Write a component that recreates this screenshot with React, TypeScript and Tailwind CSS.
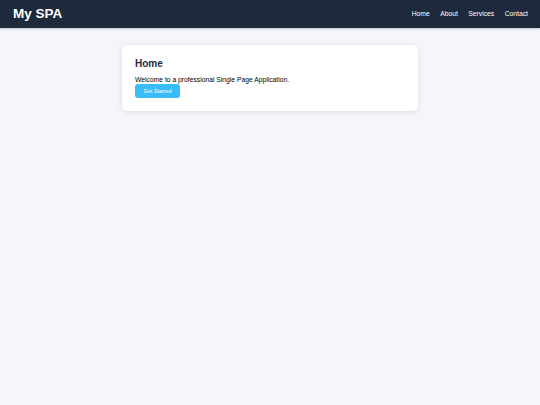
export default function App() {
  return (
    <div className="min-h-[405px] bg-[#f4f6fa]" style={{ fontFamily: '"Liberation Sans", Arial, sans-serif' }}>
      <header className="flex h-[28px] items-center justify-between bg-[#1e293b] pl-[13px] pr-[12px] shadow-[0_1px_2px_rgba(148,163,200,0.6)]">
        <div className="text-[13.5px] font-bold leading-none text-white">My SPA</div>
        <nav className="flex gap-[10.5px] text-[6.75px] leading-none text-white">
          <a>Home</a>
          <a>About</a>
          <a>Services</a>
          <a>Contact</a>
        </nav>
      </header>
      <main className="flex justify-center pt-[17px]">
        <div className="w-[296px] rounded-[5px] bg-white px-[13px] pb-[13px] pt-[13px] shadow-[0_1px_6px_rgba(0,0,0,0.1)]">
          <h2 className="text-[10px] font-bold leading-[11.5px] text-[#1e293b]">Home</h2>
          <p className="mt-[6.5px] text-[6.75px] leading-[7.8px] text-black">Welcome to a professional Single Page Application.</p>
          <button className="mt-[0.5px] flex h-[14px] items-center rounded-[3px] bg-[#38bdf8] px-[8.4px] text-[5.5px] leading-none text-white">Get Started</button>
        </div>
      </main>
    </div>
  );
}
